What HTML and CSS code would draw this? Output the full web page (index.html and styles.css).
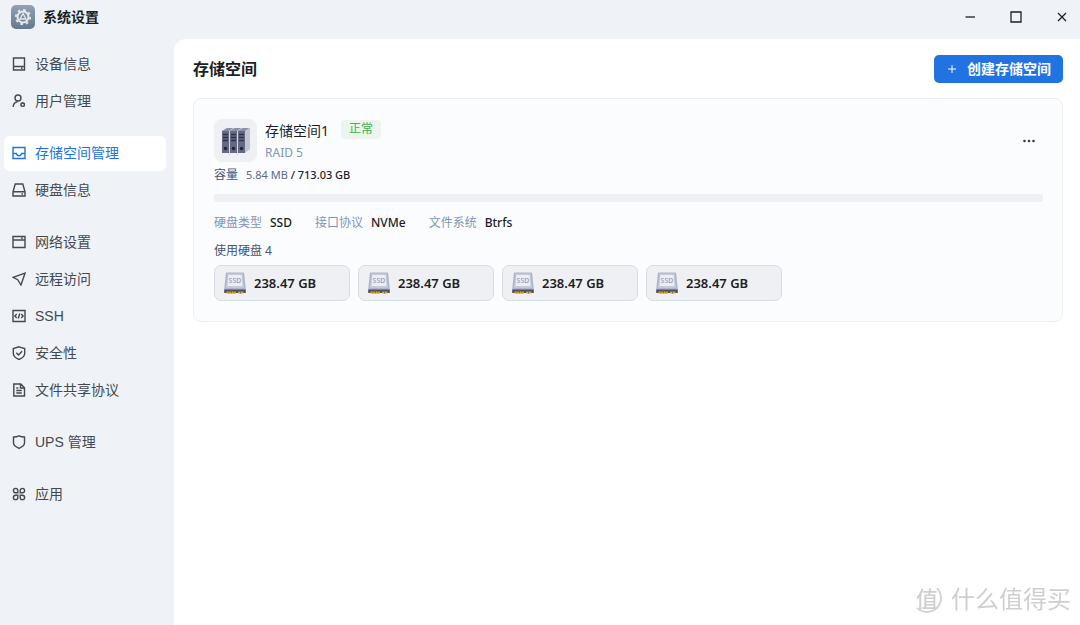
FILE: index.html
```html
<!DOCTYPE html>
<html lang="zh-CN">
<head>
<meta charset="utf-8">
<meta name="viewport" content="width=device-width, initial-scale=1">
<title>系统设置</title>
<link rel="stylesheet" href="styles.css">
</head>
<body>
<svg class="defs" aria-hidden="true">
  <symbol id="ssd" viewBox="0 0 22 22">
    <path d="M3 .5h16q1 0 1.200 1L21.800 18H.2L1.800 1.500q.2-1 1.200-1z" fill="#b1b4c8"/>
    <path d="M3.500 1.500h15L20 16H2z" fill="#c6c9d8"/>
    <path d="M4.300 3h13.400l.8 11h-15z" fill="#eceef6"/>
    <path d="M.2 17.500h21.600v3.500H.2z" fill="#4a4e66"/>
    <path d="M2.500 19.500h9.500v2H2.500zM14 19.500h5.500v2H14z" fill="#dba61d"/>
    <path d="M5 19.500v2M7.500 19.500v2M10 19.500v2M16.500 19.500v2" stroke="#4a4e66" stroke-width=".6"/>
    <text x="11" y="11" text-anchor="middle" class="ssd-label">SSD</text>
  </symbol>
</svg>
<div class="window">
  <header class="titlebar">
    <svg class="app-icon" viewBox="0 0 24 24" aria-hidden="true">
      <defs><linearGradient id="g" x1="0" y1="0" x2="0" y2="1"><stop offset="0" stop-color="#93a2b4"/><stop offset="1" stop-color="#66788e"/></linearGradient></defs>
      <rect width="24" height="24" rx="5" fill="url(#g)"/>
      <circle cx="12" cy="12" r="7.200" fill="none" stroke="#e6eaef" stroke-width="1.800" stroke-dasharray="2.600 3.050"/>
      <circle cx="12" cy="12" r="5.500" fill="none" stroke="#e6eaef" stroke-width="2"/>
      <path d="M12 8.500l3 5.500H9z" fill="none" stroke="#e6eaef" stroke-width="1.300"/>
    </svg>
    <h1 class="app-title">系统设置</h1>
    <div class="window-controls">
      <button type="button" aria-label="最小化"><svg viewBox="0 0 12 12"><path d="M1.500 6h9.500"/></svg></button>
      <button type="button" aria-label="最大化"><svg viewBox="0 0 12 12"><path d="M1 1h10v10H1z"/></svg></button>
      <button type="button" aria-label="关闭"><svg viewBox="0 0 12 12"><path d="M2 2l8 8M10 2l-8 8"/></svg></button>
    </div>
  </header>
  <nav class="sidebar" aria-label="设置">
    <div class="group">
      <a href="#device"><svg viewBox="0 0 14 14"><path d="M1.500 1h11v12h-11zM1.500 9.500h11M9 11.200h1.500"/></svg>设备信息</a>
      <a href="#users"><svg viewBox="0 0 14 14"><circle cx="6" cy="4" r="3"/><path d="M1.200 13c0-3 1.600-4.700 4.300-5.200"/><circle cx="10.700" cy="10.700" r="1.700"/><path d="M10.700 8.300v.8M10.700 12.300v.8M8.600 9.500l.7.400M12.100 11.500l.7.400M8.600 11.900l.7-.4M12.100 9.900l.7-.4"/></svg>用户管理</a>
    </div>
    <div class="group">
      <a href="#storage" class="active" aria-current="page"><svg viewBox="0 0 14 14"><path d="M1 1.500h12v11H1zM1 7.500h3.300c.4 1.500 1.300 2.200 2.700 2.200s2.300-.7 2.700-2.200H13"/></svg>存储空间管理</a>
      <a href="#disks"><svg viewBox="0 0 14 14"><path d="M3.200 1h7.600l2.200 7.800V13H1V8.800zM1 8.800h12M9.500 11h1.500"/></svg>硬盘信息</a>
    </div>
    <div class="group">
      <a href="#network"><svg viewBox="0 0 14 14"><path d="M1 1.500h12v11H1zM1 5h12M9.200 3.300h1.500"/></svg>网络设置</a>
      <a href="#remote"><svg viewBox="0 0 14 14"><path d="M13 1.200L1 5.300l4.700 2.400L9 13z"/></svg>远程访问</a>
      <a href="#ssh"><svg viewBox="0 0 14 14"><path d="M1 1.500h12v11H1zM4.700 5L2.900 7l1.800 2M9.300 5l1.800 2-1.800 2M7.700 4.500l-1.400 5"/></svg>SSH</a>
      <a href="#security"><svg viewBox="0 0 14 14"><path d="M7 .8l5.700 1.700v5c0 2.700-2 4.400-5.700 6-3.700-1.600-5.700-3.300-5.700-6v-5zM4.300 6.700L6.500 9l3.600-3.800"/></svg>安全性</a>
      <a href="#sharing"><svg viewBox="0 0 14 14"><path d="M1.800 1h7l3.700 3.700V13H1.800zM8.500 1v4h4M4.300 5h2M4.300 7.500h5.500M4.300 10h5.500"/></svg>文件共享协议</a>
    </div>
    <div class="group">
      <a href="#ups"><svg viewBox="0 0 14 14"><path d="M7 .8c2 1 3.800 1.200 5.500 1.200v6c0 2-2 3.800-5.500 5.300C3.500 11.800 1.500 10 1.500 8V2C3.200 2 5 1.800 7 .8z"/></svg>UPS 管理</a>
    </div>
    <div class="group">
      <a href="#apps"><svg viewBox="0 0 14 14"><path d="M5.800 5.800H3.600a2.200 2.200 0 1 1 2.200-2.200zM8.200 5.800V3.600a2.200 2.200 0 1 1 2.200 2.200zM5.800 8.200v2.200a2.200 2.200 0 1 1-2.200-2.200zM8.200 8.200h2.200a2.200 2.200 0 1 1-2.200 2.200z"/></svg>应用</a>
    </div>
  </nav>
  <main class="content">
    <div class="page-head">
      <h2>存储空间</h2>
      <button type="button" class="create"><svg viewBox="0 0 10 10" aria-hidden="true"><path d="M5 1v8M1 5h8"/></svg>创建存储空间</button>
    </div>
    <section class="card">
      <div class="pool">
        <div class="pool-icon">
          <svg viewBox="0 0 30 28" aria-hidden="true">
            <path d="M1 4l5-3h23v21l-5 4z" fill="#c3c5d2"/>
            <path d="M1 4l5-3h6L8 4zM9 4l5-3h6l-4 3zM17 4l5-3h6l-4 3z" fill="#8d90a5"/>
            <path d="M1 4h7v22H1zM9 4h7v22H9zM17 4h7v22h-7z" fill="#656982"/>
            <path d="M2 7.500h5M2 10.500h5M2 13.500h5M10 7.500h5M10 10.500h5M10 13.500h5M18 7.500h5M18 10.500h5M18 13.500h5" stroke="#30334a" stroke-width="1.300"/>
            <path d="M8.500 4v22M16.500 4v22" stroke="#d5d7e1"/>
            <g fill="#202338"><circle cx="4.500" cy="21.500" r="1.700"/><circle cx="12.500" cy="21.500" r="1.700"/><circle cx="20.500" cy="21.500" r="1.700"/></g>
          </svg>
        </div>
        <div class="pool-text">
          <div class="pool-name"><h3>存储空间1</h3><span class="tag">正常</span></div>
          <div class="raid">RAID 5</div>
        </div>
        <button type="button" class="more" aria-label="更多"><svg viewBox="0 0 14 4"><circle cx="2.500" cy="2" r="1.300"/><circle cx="7" cy="2" r="1.300"/><circle cx="11.500" cy="2" r="1.300"/></svg></button>
      </div>
      <div class="capacity"><span class="cap-label">容量</span><span class="cap-value"><span class="used">5.84 MB</span> / 713.03 GB</span></div>
      <div class="bar" role="progressbar" aria-label="容量" aria-valuenow="0"></div>
      <dl class="facts">
        <div><dt>硬盘类型</dt><dd>SSD</dd></div>
        <div><dt>接口协议</dt><dd>NVMe</dd></div>
        <div><dt>文件系统</dt><dd>Btrfs</dd></div>
      </dl>
      <div class="disk-count">使用硬盘 4</div>
      <ul class="disks">
        <li><svg aria-hidden="true"><use href="#ssd"/></svg>238.47 GB</li>
        <li><svg aria-hidden="true"><use href="#ssd"/></svg>238.47 GB</li>
        <li><svg aria-hidden="true"><use href="#ssd"/></svg>238.47 GB</li>
        <li><svg aria-hidden="true"><use href="#ssd"/></svg>238.47 GB</li>
      </ul>
    </section>
  </main>
</div>
<div class="watermark"><span class="mark">值</span>什么值得买</div>
</body>
</html>
```

FILE: styles.css
```css
* { box-sizing: border-box; }

body {
  margin: 0;
  background: #eff3f8;
  color: #1b1e24;
  font-family: "Noto Sans", "Noto Sans CJK SC", sans-serif;
  font-size: 12px;
  line-height: 18px;
}

h1, h2, h3, dl, dd, ul { margin: 0; padding: 0; }
button { border: 0; padding: 0; background: none; font: inherit; color: inherit; }
svg { display: block; flex: none; }
.defs { display: none; }

.window {
  display: grid;
  grid-template-columns: 174px 1fr;
  grid-template-rows: 39px 1fr;
  min-height: 100vh;
}

.titlebar {
  grid-column: 1 / -1;
  display: flex;
  align-items: center;
  gap: 8px;
  padding: 0 0 5px 11px;
}
.app-icon { width: 24px; height: 24px; }
.app-title { font-size: 14px; line-height: 20px; font-weight: 700; }
.window-controls { display: flex; gap: 10px; margin-left: auto; }
.window-controls button {
  width: 36px;
  height: 32px;
  display: grid;
  place-items: center;
}
.window-controls svg { width: 12px; height: 12px; fill: none; stroke: #1d2025; stroke-width: 1.3; }

.sidebar {
  display: flex;
  flex-direction: column;
  gap: 17px;
  padding: 8px 8px 8px 4px;
}
.group { display: flex; flex-direction: column; gap: 2px; }
.sidebar a {
  display: flex;
  align-items: center;
  gap: 9px;
  height: 35px;
  padding: 0 8px 2px;
  border-radius: 6px;
  color: #44484f;
  text-decoration: none;
  font-family: "Liberation Sans", "Noto Sans CJK SC", sans-serif;
  font-size: 14px;
}
.sidebar svg { width: 14px; height: 14px; fill: none; stroke: currentColor; stroke-width: 1.4; }
.sidebar .active { background: #fff; color: #2273e2; }

.content {
  background: #fff;
  border-top-left-radius: 12px;
  padding: 16px 17px 16px 19px;
}
.page-head { display: flex; align-items: center; justify-content: space-between; }
.page-head h2 { font-size: 16px; line-height: 24px; font-weight: 700; }
.create {
  display: flex;
  align-items: center;
  gap: 10px;
  height: 28px;
  padding: 0 12px 0 13px;
  border-radius: 5px;
  background: #2273e2;
  color: #fff;
  font-size: 14px;
  font-weight: 700;
}
.create svg { width: 10px; height: 10px; stroke: currentColor; }

.card {
  margin-top: 15px;
  padding: 20px 19px 20px 20px;
  border: 1px solid #ebeef4;
  border-radius: 8px;
  background: #fbfcfe;
}
.pool { display: flex; gap: 8px; }
.pool-icon {
  width: 43px;
  height: 43px;
  display: grid;
  place-items: center;
  border-radius: 8px;
  background: #eff0f4;
}
.pool-icon svg { width: 30px; height: 28px; }
.pool-text { display: flex; flex-direction: column; gap: 2px; padding-top: 1px; }
.pool-name { display: flex; align-items: flex-start; gap: 12px; height: 22px; }
.pool-name h3 { font-size: 14px; line-height: 22px; font-weight: 400; }
.tag { padding: 0 8px 1px; border-radius: 4px; background: #ebf5ed; color: #4caf50; }
.raid { color: #8195b4; }
.more { align-self: center; margin-left: auto; padding: 6px 7px; }
.more svg { width: 14px; height: 4px; fill: #353b50; }

.capacity { display: flex; gap: 8px; margin-top: 4px; font-weight: 500; }
.cap-label { color: #46546e; font-weight: 400; }
.cap-value { font-size: 11px; }
.used { color: #5c6a84; font-weight: 400; }
.bar { height: 8px; margin-top: 10px; border-radius: 3px; background: #eff0f4; }

.facts { display: flex; gap: 23px; margin-top: 12px; }
.facts div { display: flex; gap: 8px; }
.facts dt { color: #8195b4; }
.facts dd { font-weight: 500; }

.disk-count { margin-top: 10px; color: #46546e; }
.disks { display: flex; flex-wrap: wrap; gap: 8px; margin-top: 5px; list-style: none; }
.disks li {
  display: flex;
  align-items: center;
  gap: 8px;
  width: 136px;
  height: 36px;
  padding: 0 9px;
  border: 1px solid #d5dbe7;
  border-radius: 7px;
  background: #eff0f4;
  font-size: 13px;
  font-weight: 600;
}
.disks svg { width: 22px; height: 22px; }
.ssd-label { font-family: "Noto Sans", sans-serif; font-size: 7px; font-weight: 600; fill: #a0a3b8; }

.watermark {
  position: fixed;
  right: 9px;
  bottom: 12px;
  display: flex;
  align-items: center;
  gap: 9px;
  color: #cfcfcf;
  font-family: "Noto Sans CJK SC", sans-serif;
  font-size: 24px;
  line-height: 30px;
  pointer-events: none;
}
.mark {
  width: 30px;
  height: 30px;
  border: 2px solid #d4d4d4;
  border-left-color: transparent;
  border-top-color: transparent;
  border-radius: 50%;
  font-size: 22px;
  line-height: 24px;
  font-weight: 500;
  text-align: center;
}
```
